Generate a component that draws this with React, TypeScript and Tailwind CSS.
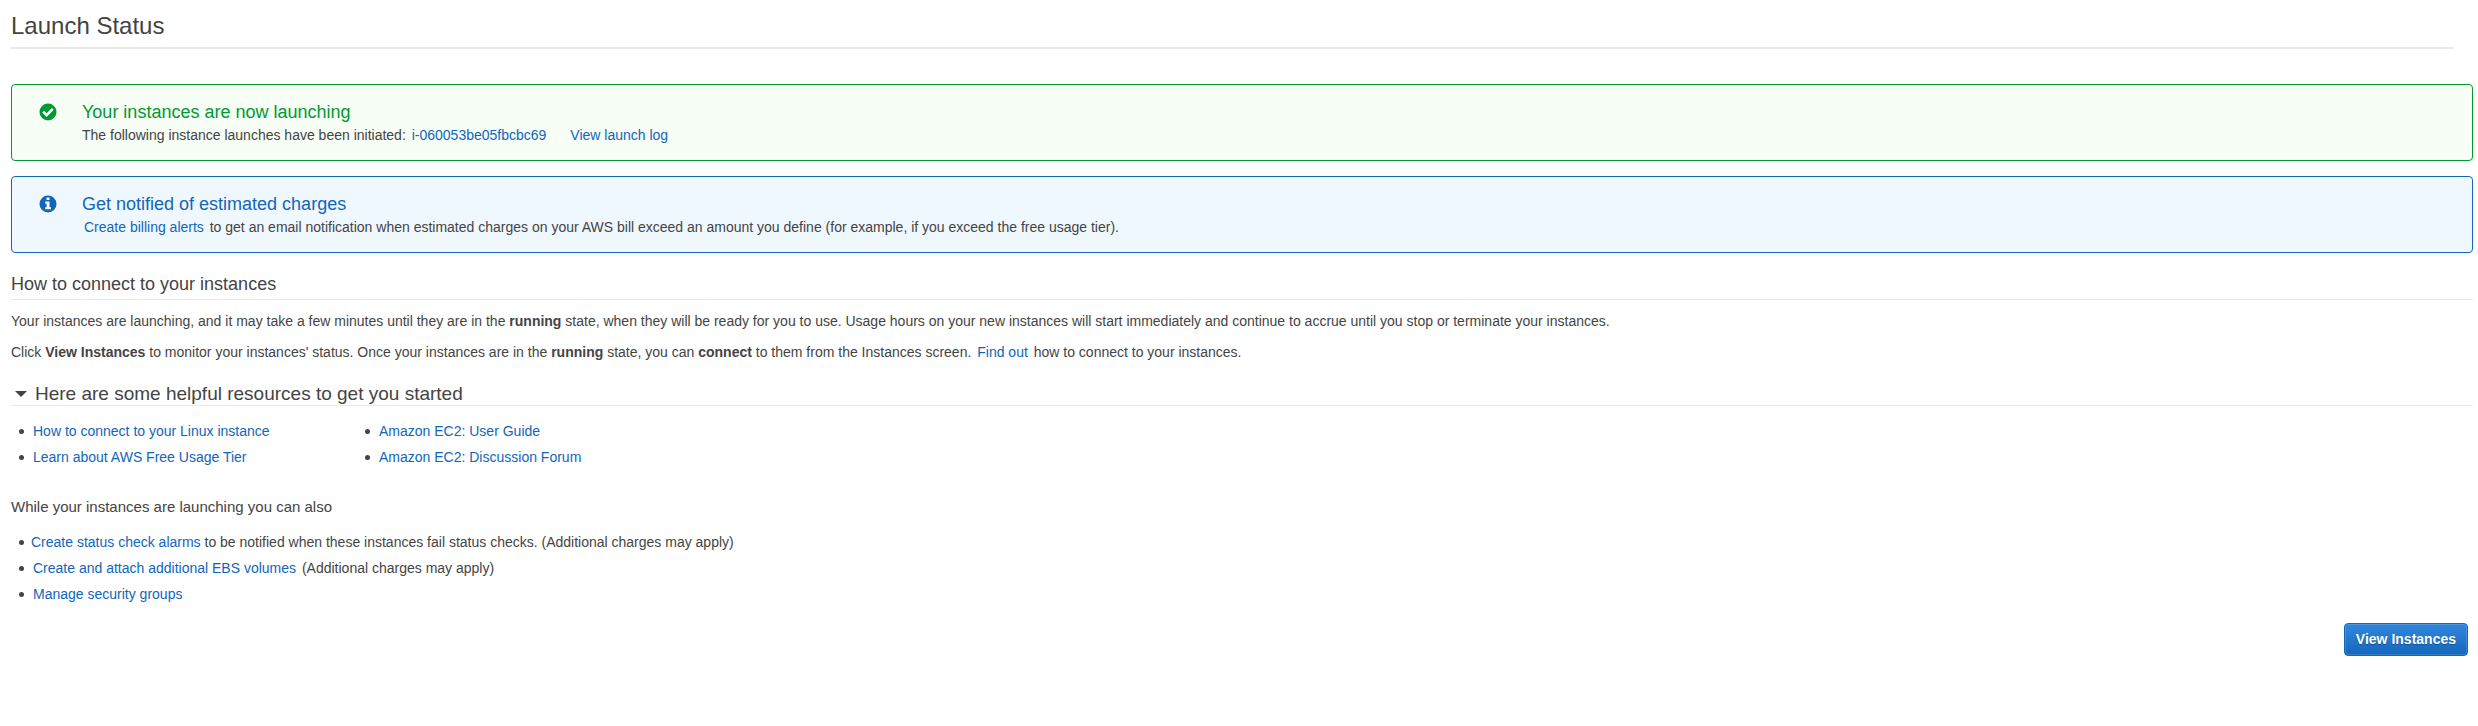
import React from "react";

type LinkProps = { children: React.ReactNode; className?: string };

function TextLink({ children, className = "mx-0.5" }: LinkProps) {
  return (
    <a href="#" className={`text-[#1166bb] hover:underline ${className}`}>
      {children}
    </a>
  );
}

function CheckCircleIcon() {
  return (
    <svg viewBox="0 0 18 18" className="size-[18px]" aria-hidden="true">
      <circle cx="9" cy="9" r="8.5" fill="#009933" />
      <path d="M4.2 8.6l3.4 3.5 6.2-6.2" fill="none" stroke="#fff" strokeWidth="2.6" />
    </svg>
  );
}

function InfoCircleIcon() {
  return (
    <svg viewBox="0 0 18 18" className="size-[18px]" aria-hidden="true">
      <circle cx="9" cy="9" r="8.5" fill="#1166bb" />
      <path d="M7.5 2.5h3v2.5h-3zM6.2 6.5h4.3v5.7H12v2H6.2v-2h1.4V8.4H6.2z" fill="#fff" />
    </svg>
  );
}

type AlertProps = {
  tone: string;
  titleTone: string;
  icon: React.ReactNode;
  title: string;
  children: React.ReactNode;
};

function Alert({ tone, titleTone, icon, title, children }: AlertProps) {
  return (
    <section className={`flex rounded border pt-4 pr-4 pb-[13px] pl-[27px] ${tone}`}>
      <div className="w-[43px] shrink-0 pt-0.5">{icon}</div>
      <div>
        <h2 className={`text-lg leading-[22px] ${titleTone}`}>{title}</h2>
        <p className="leading-6">{children}</p>
      </div>
    </section>
  );
}

function Bullet({ children }: { children: React.ReactNode }) {
  return (
    <li className="flex items-center">
      <span className="mr-[7px] size-[5px] shrink-0 rounded-full bg-[#444444]" />
      <span>{children}</span>
    </li>
  );
}

export default function App() {
  return (
    <main className="bg-white pt-3 pr-[5px] pb-6 pl-[11px] font-['Liberation_Sans',Arial,sans-serif] text-sm leading-5 text-[#444444]">
      <h1 className="mr-5 mb-[35px] border-b-2 border-[#eaeaea] pb-[7px] text-2xl leading-7">
        Launch Status
      </h1>

      <div className="flex flex-col gap-[15px]">
        <Alert
          tone="border-[#009933] bg-[#f6fef6]"
          titleTone="text-[#009933]"
          icon={<CheckCircleIcon />}
          title="Your instances are now launching"
        >
          The following instance launches have been initiated: <TextLink>i-060053be05fbcbc69</TextLink>
          <TextLink className="ml-[22px]">View launch log</TextLink>
        </Alert>
        <Alert
          tone="border-[#1166bb] bg-[#f0f8ff]"
          titleTone="text-[#1166bb]"
          icon={<InfoCircleIcon />}
          title="Get notified of estimated charges"
        >
          <TextLink>Create billing alerts</TextLink> to get an email notification when estimated charges on
          your AWS bill exceed an amount you define (for example, if you exceed the free usage tier).
        </Alert>
      </div>

      <h2 className="mt-[19px] border-b border-[#eaeaea] pb-[3px] text-lg leading-6">
        How to connect to your instances
      </h2>
      <p className="mt-[11px]">
        Your instances are launching, and it may take a few minutes until they are in the <b>running</b> state,
        when they will be ready for you to use. Usage hours on your new instances will start immediately and
        continue to accrue until you stop or terminate your instances.
      </p>
      <p className="mt-[11px]">
        Click <b>View Instances</b> to monitor your instances' status. Once your instances are in the{" "}
        <b>running</b> state, you can <b>connect</b> to them from the Instances screen.{" "}
        <TextLink>Find out</TextLink> how to connect to your instances.
      </p>

      <h2 className="mt-[21px] border-b border-[#eaeaea] text-[19px] leading-[22px]">
        <button type="button" aria-expanded="true" className="flex items-center gap-2 pl-1">
          <svg viewBox="0 0 12 6" className="h-1.5 w-3" aria-hidden="true">
            <path d="M0 0h12L6 6z" fill="#444444" />
          </svg>
          Here are some helpful resources to get you started
        </button>
      </h2>

      <div className="mt-3 flex pl-2 leading-[26px]">
        <ul className="w-[346px]">
          <Bullet><TextLink>How to connect to your Linux instance</TextLink></Bullet>
          <Bullet><TextLink>Learn about AWS Free Usage Tier</TextLink></Bullet>
        </ul>
        <ul>
          <Bullet><TextLink>Amazon EC2: User Guide</TextLink></Bullet>
          <Bullet><TextLink>Amazon EC2: Discussion Forum</TextLink></Bullet>
        </ul>
      </div>

      <p className="mt-[27px] text-[15px]">While your instances are launching you can also</p>
      <ul className="mt-3 pl-2 leading-[26px]">
        <Bullet>
          <TextLink className="">Create status check alarms</TextLink> to be notified when these instances fail
          status checks. (Additional charges may apply)
        </Bullet>
        <Bullet>
          <TextLink>Create and attach additional EBS volumes</TextLink> (Additional charges may apply)
        </Bullet>
        <Bullet><TextLink>Manage security groups</TextLink></Bullet>
      </ul>

      <div className="mt-4 flex justify-end pr-[5px]">
        <button
          type="button"
          className="rounded border border-[#1166bb] bg-linear-to-b from-[#3287dd] to-[#1166bb] px-[11px] py-[5px] font-bold leading-[21px] text-white shadow-[inset_0_0_0_1px_rgba(255,255,255,0.15)] text-shadow-[0_1px_1px_rgb(0_0_0/0.3)]"
        >
          View Instances
        </button>
      </div>
    </main>
  );
}
